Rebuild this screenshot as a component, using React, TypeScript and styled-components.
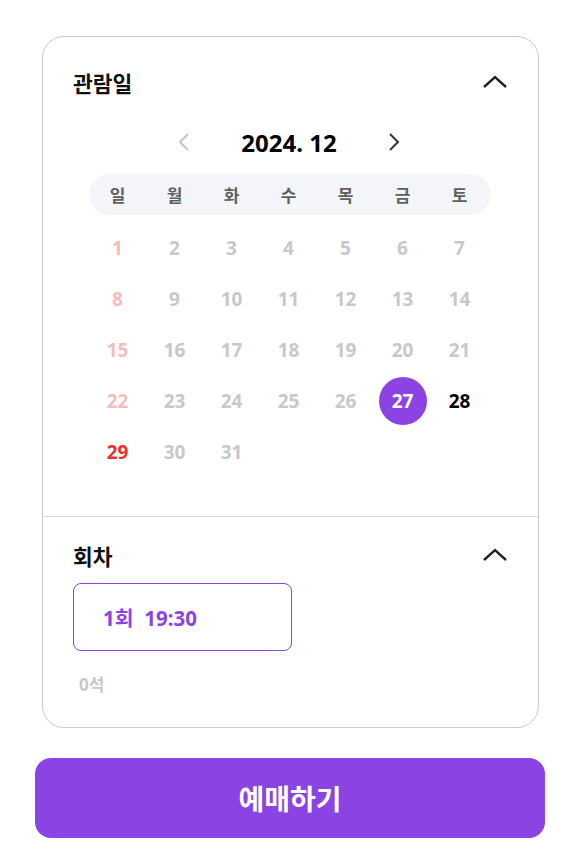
import React from "react";
import styled, { createGlobalStyle } from "styled-components";

const Global = createGlobalStyle`
  html, body { margin: 0; padding: 0; background: #fff; }
  body { font-family: "Noto Sans", "Noto Sans CJK KR", sans-serif; }
`;

const PURPLE = "#8c43e4";

const Page = styled.div`
  width: 570px;
  padding: 36px 0 0 35px;
  box-sizing: border-box;
  display: flex;
  flex-direction: column;
`;

const Card = styled.div`
  width: 497px;
  margin-left: 7px;
  border: 1px solid #c9c9c9;
  border-radius: 22px;
  box-sizing: border-box;
  background: #fff;
`;

const Section = styled.div<{ $pb: number; $pt: number; $divider?: boolean }>`
  padding: ${(p) => p.$pt}px 0 ${(p) => p.$pb}px;
  border-top: ${(p) => (p.$divider ? "1px solid #d9d9d9" : "none")};
`;

const Header = styled.div`
  display: flex;
  align-items: center;
  justify-content: space-between;
  height: 32px;
  padding: 0 30px 0 30px;
`;

const Title = styled.div`
  font-family: "Noto Sans CJK KR", sans-serif;
  font-size: 21.5px;
  font-weight: 700;
  color: #111;
`;

const MonthNav = styled.div`
  display: flex;
  align-items: center;
  justify-content: center;
  margin-top: 26px;
  height: 36px;
  padding-right: 3px;
`;

const NavBtn = styled.span`
  display: flex;
  width: 24px;
  justify-content: center;
`;

const MonthTitle = styled.div`
  width: 186px;
  text-align: center;
  font-size: 24px;
  font-weight: 700;
  color: #000;
`;

const WeekBar = styled.div`
  margin: 14px 0 0 46px;
  width: 402px;
  height: 41px;
  border-radius: 21px;
  background: #f4f5f9;
  display: grid;
  grid-template-columns: repeat(7, 57px);
  align-items: center;
`;

const WeekDay = styled.div`
  text-align: center;
  font-family: "Noto Sans CJK KR", sans-serif;
  font-size: 17px;
  font-weight: 700;
  color: #606060;
`;

const DayGrid = styled.div`
  margin: 7px 0 0 46px;
  display: grid;
  grid-template-columns: repeat(7, 57px);
  grid-auto-rows: 51px;
`;

type Tone = "sunPast" | "past" | "sun" | "active" | "selected";

const toneColor: Record<Tone, string> = {
  sunPast: "#f6bcbc",
  past: "#c8c8c8",
  sun: "#e8302c",
  active: "#000",
  selected: "#fff",
};

const Day = styled.div<{ $tone: Tone }>`
  display: flex;
  align-items: center;
  justify-content: center;
  font-size: 19px;
  font-weight: 700;
  color: ${(p) => toneColor[p.$tone]};
`;

const DayCircle = styled.span<{ $on: boolean }>`
  display: flex;
  align-items: center;
  justify-content: center;
  width: 48px;
  height: 48px;
  border-radius: 50%;
  background: ${(p) => (p.$on ? PURPLE : "transparent")};
`;

const SessionBox = styled.div`
  margin: 12px 0 0 30px;
  width: 219px;
  height: 68px;
  box-sizing: border-box;
  border: 1px solid ${PURPLE};
  border-radius: 8px;
  display: flex;
  align-items: center;
  padding-left: 29px;
  font-family: "Noto Sans", "Noto Sans CJK KR", sans-serif;
  font-size: 20.5px;
  font-weight: 700;
  color: ${PURPLE};
  white-space: pre;
`;

const Seats = styled.div`
  margin: 20px 0 0 36px;
  font-size: 17px;
  font-weight: 700;
  color: #c8c8c8;
`;

const BookButton = styled.button`
  margin-top: 30px;
  width: 510px;
  height: 80px;
  border: none;
  border-radius: 16px;
  background: ${PURPLE};
  color: #fff;
  font-family: "Noto Sans CJK KR", sans-serif;
  font-size: 28px;
  font-weight: 700;
  display: flex;
  align-items: center;
  justify-content: center;
  padding: 0;
`;

const ChevronUp = () => (
  <svg width="26" height="16" viewBox="0 0 26 16" fill="none">
    <polyline points="2,13 13,3 24,13" stroke="#222" strokeWidth="2.4" strokeLinejoin="miter" />
  </svg>
);

const Chevron = ({ dir, color }: { dir: "l" | "r"; color: string }) => (
  <svg width="12" height="20" viewBox="0 0 12 20" fill="none">
    <polyline
      points={dir === "l" ? "10,2 2,10 10,18" : "2,2 10,10 2,18"}
      stroke={color}
      strokeWidth="2"
    />
  </svg>
);

const weekDays = ["일", "월", "화", "수", "목", "금", "토"];

function toneFor(d: number, col: number): Tone {
  if (d === 27) return "selected";
  if (d === 28) return "active";
  if (d === 29) return "sun";
  if (col === 0) return "sunPast";
  return "past";
}

export default function App() {
  const days = Array.from({ length: 31 }, (_, i) => i + 1);
  return (
    <>
      <Global />
      <Page>
        <Card>
          <Section $pt={29} $pb={39}>
            <Header>
              <Title>관람일</Title>
              <ChevronUp />
            </Header>
            <MonthNav>
              <NavBtn>
                <Chevron dir="l" color="#c4c4c4" />
              </NavBtn>
              <MonthTitle>2024. 12</MonthTitle>
              <NavBtn>
                <Chevron dir="r" color="#333" />
              </NavBtn>
            </MonthNav>
            <WeekBar>
              {weekDays.map((w) => (
                <WeekDay key={w}>{w}</WeekDay>
              ))}
            </WeekBar>
            <DayGrid>
              {days.map((d, i) => {
                const tone = toneFor(d, i % 7);
                return (
                  <Day key={d} $tone={tone}>
                    <DayCircle $on={tone === "selected"}>{d}</DayCircle>
                  </Day>
                );
              })}
            </DayGrid>
          </Section>
          <Section $divider $pt={22} $pb={31}>
            <Header>
              <Title>회차</Title>
              <ChevronUp />
            </Header>
            <SessionBox>{"1회  19:30"}</SessionBox>
            <Seats>0석</Seats>
          </Section>
        </Card>
        <BookButton>예매하기</BookButton>
      </Page>
    </>
  );
}
